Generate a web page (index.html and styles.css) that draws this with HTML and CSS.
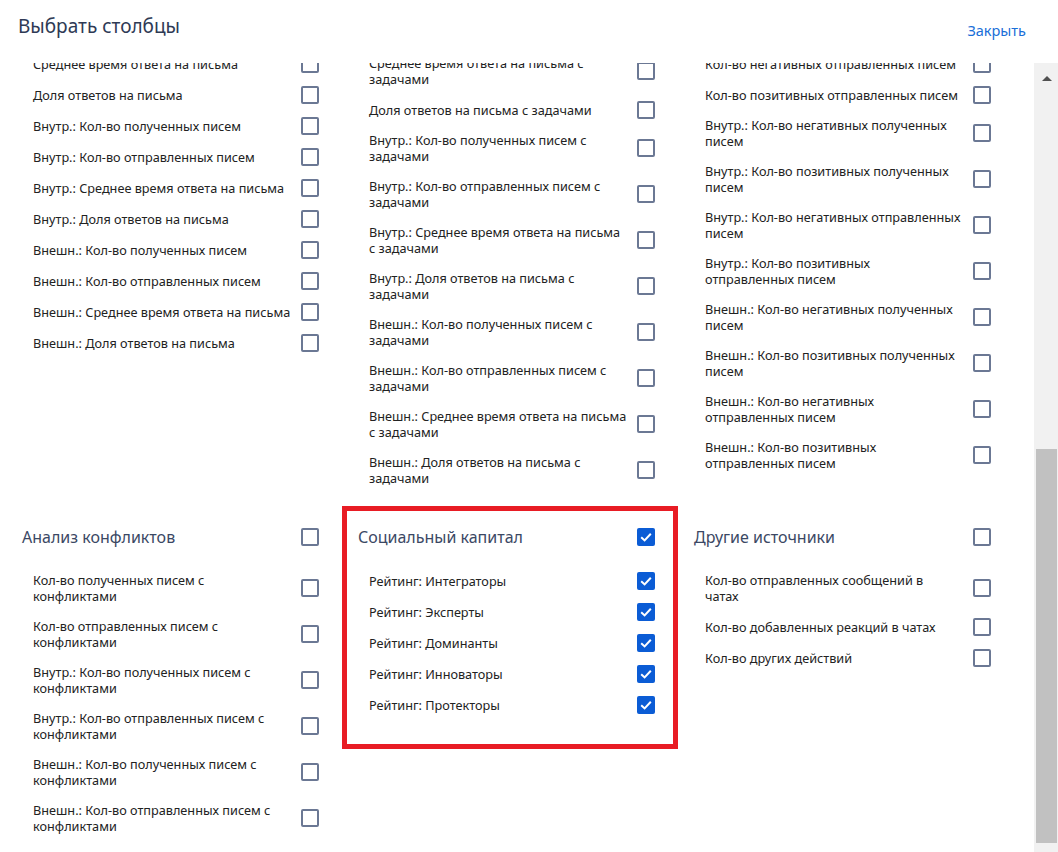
FILE: index.html
```html
<!DOCTYPE html>
<html lang="ru">
<head>
    <meta charset="UTF-8">
    <meta name="viewport" content="width=device-width, initial-scale=1.0">
    <title>Выбрать столбцы</title>
    <link rel="stylesheet" href="styles.css">
</head>
<body>
    <header class="dialog-header">
        <h1 class="dialog-title">Выбрать столбцы</h1>
        <a class="close-link" href="#">Закрыть</a>
    </header>

    <div class="dialog-body">
        <div class="columns-panel">
            <div class="groups">
                <!-- row 1: already scrolled, group headers are above the visible area -->
                <section class="group continued">
                    <div class="item"><span>Среднее время ответа на письма</span><span class="checkbox"></span></div>
                    <div class="item"><span>Доля ответов на письма</span><span class="checkbox"></span></div>
                    <div class="item"><span>Внутр.: Кол-во полученных писем</span><span class="checkbox"></span></div>
                    <div class="item"><span>Внутр.: Кол-во отправленных писем</span><span class="checkbox"></span></div>
                    <div class="item"><span>Внутр.: Среднее время ответа на письма</span><span class="checkbox"></span></div>
                    <div class="item"><span>Внутр.: Доля ответов на письма</span><span class="checkbox"></span></div>
                    <div class="item"><span>Внешн.: Кол-во полученных писем</span><span class="checkbox"></span></div>
                    <div class="item"><span>Внешн.: Кол-во отправленных писем</span><span class="checkbox"></span></div>
                    <div class="item"><span>Внешн.: Среднее время ответа на письма</span><span class="checkbox"></span></div>
                    <div class="item"><span>Внешн.: Доля ответов на письма</span><span class="checkbox"></span></div>
                </section>

                <section class="group continued">
                    <div class="item"><span>Среднее время ответа на письма с<br>задачами</span><span class="checkbox"></span></div>
                    <div class="item"><span>Доля ответов на письма с задачами</span><span class="checkbox"></span></div>
                    <div class="item"><span>Внутр.: Кол-во полученных писем с<br>задачами</span><span class="checkbox"></span></div>
                    <div class="item"><span>Внутр.: Кол-во отправленных писем с<br>задачами</span><span class="checkbox"></span></div>
                    <div class="item"><span>Внутр.: Среднее время ответа на письма<br>с задачами</span><span class="checkbox"></span></div>
                    <div class="item"><span>Внутр.: Доля ответов на письма с<br>задачами</span><span class="checkbox"></span></div>
                    <div class="item"><span>Внешн.: Кол-во полученных писем с<br>задачами</span><span class="checkbox"></span></div>
                    <div class="item"><span>Внешн.: Кол-во отправленных писем с<br>задачами</span><span class="checkbox"></span></div>
                    <div class="item"><span>Внешн.: Среднее время ответа на письма<br>с задачами</span><span class="checkbox"></span></div>
                    <div class="item"><span>Внешн.: Доля ответов на письма с<br>задачами</span><span class="checkbox"></span></div>
                </section>

                <section class="group continued">
                    <div class="item"><span>Кол-во негативных отправленных писем</span><span class="checkbox"></span></div>
                    <div class="item"><span>Кол-во позитивных отправленных писем</span><span class="checkbox"></span></div>
                    <div class="item"><span>Внутр.: Кол-во негативных полученных<br>писем</span><span class="checkbox"></span></div>
                    <div class="item"><span>Внутр.: Кол-во позитивных полученных<br>писем</span><span class="checkbox"></span></div>
                    <div class="item"><span>Внутр.: Кол-во негативных отправленных<br>писем</span><span class="checkbox"></span></div>
                    <div class="item"><span>Внутр.: Кол-во позитивных<br>отправленных писем</span><span class="checkbox"></span></div>
                    <div class="item"><span>Внешн.: Кол-во негативных полученных<br>писем</span><span class="checkbox"></span></div>
                    <div class="item"><span>Внешн.: Кол-во позитивных полученных<br>писем</span><span class="checkbox"></span></div>
                    <div class="item"><span>Внешн.: Кол-во негативных<br>отправленных писем</span><span class="checkbox"></span></div>
                    <div class="item"><span>Внешн.: Кол-во позитивных<br>отправленных писем</span><span class="checkbox"></span></div>
                </section>

                <!-- row 2 -->
                <section class="group">
                    <div class="group-header"><span>Анализ конфликтов</span><span class="checkbox"></span></div>
                    <div class="item"><span>Кол-во полученных писем с<br>конфликтами</span><span class="checkbox"></span></div>
                    <div class="item"><span>Кол-во отправленных писем с<br>конфликтами</span><span class="checkbox"></span></div>
                    <div class="item"><span>Внутр.: Кол-во полученных писем с<br>конфликтами</span><span class="checkbox"></span></div>
                    <div class="item"><span>Внутр.: Кол-во отправленных писем с<br>конфликтами</span><span class="checkbox"></span></div>
                    <div class="item"><span>Внешн.: Кол-во полученных писем с<br>конфликтами</span><span class="checkbox"></span></div>
                    <div class="item"><span>Внешн.: Кол-во отправленных писем с<br>конфликтами</span><span class="checkbox"></span></div>
                </section>

                <section class="group highlighted">
                    <div class="group-header"><span>Социальный капитал</span><span class="checkbox checked"><svg viewBox="0 0 18 18"><polyline points="4.2,9.2 7.6,12.4 13.8,5.8"/></svg></span></div>
                    <div class="item"><span>Рейтинг: Интеграторы</span><span class="checkbox checked"><svg viewBox="0 0 18 18"><polyline points="4.2,9.2 7.6,12.4 13.8,5.8"/></svg></span></div>
                    <div class="item"><span>Рейтинг: Эксперты</span><span class="checkbox checked"><svg viewBox="0 0 18 18"><polyline points="4.2,9.2 7.6,12.4 13.8,5.8"/></svg></span></div>
                    <div class="item"><span>Рейтинг: Доминанты</span><span class="checkbox checked"><svg viewBox="0 0 18 18"><polyline points="4.2,9.2 7.6,12.4 13.8,5.8"/></svg></span></div>
                    <div class="item"><span>Рейтинг: Инноваторы</span><span class="checkbox checked"><svg viewBox="0 0 18 18"><polyline points="4.2,9.2 7.6,12.4 13.8,5.8"/></svg></span></div>
                    <div class="item"><span>Рейтинг: Протекторы</span><span class="checkbox checked"><svg viewBox="0 0 18 18"><polyline points="4.2,9.2 7.6,12.4 13.8,5.8"/></svg></span></div>
                </section>

                <section class="group">
                    <div class="group-header"><span>Другие источники</span><span class="checkbox"></span></div>
                    <div class="item"><span>Кол-во отправленных сообщений в<br>чатах</span><span class="checkbox"></span></div>
                    <div class="item"><span>Кол-во добавленных реакций в чатах</span><span class="checkbox"></span></div>
                    <div class="item"><span>Кол-во других действий</span><span class="checkbox"></span></div>
                </section>
            </div>
        </div>

        <div class="scrollbar">
            <div class="scroll-arrow"></div>
            <div class="scroll-thumb"></div>
        </div>
    </div>
</body>
</html>
```

FILE: styles.css
```css
body {
    font-family: "Noto Sans", "Open Sans", sans-serif;
    margin: 0;
    padding: 0;
    background-color: #ffffff;
    color: #222222;
    height: 852px;
    overflow: hidden;
    display: flex;
    flex-direction: column;
}
.dialog-header {
    height: 63px;
    flex-shrink: 0;
    display: flex;
    justify-content: space-between;
    align-items: flex-start;
    padding: 12px 32px 0 18px;
    box-sizing: border-box;
}
.dialog-title {
    margin: 0;
    font-size: 19px;
    font-weight: 400;
    line-height: 28px;
    color: #2e3a55;
}
.close-link {
    margin-top: 7px;
    font-size: 14.5px;
    line-height: 22px;
    color: #1a6fd8;
    text-decoration: none;
}
.dialog-body {
    flex: 1;
    display: flex;
    min-height: 0;
}
.columns-panel {
    flex: 1;
    overflow: hidden;
    padding-left: 6px;
}
.groups {
    display: grid;
    grid-template-columns: repeat(3, 336px);
    align-items: start;
    margin-top: -15px;
}
.group {
    padding: 12px 0;
    position: relative;
}
.group.continued {
    padding-top: 0;
}
.group.highlighted::after {
    content: "";
    position: absolute;
    top: 1px;
    left: 0;
    right: 0;
    bottom: -17px;
    border: 5px solid #e81c24;
}
.group-header {
    height: 40px;
    margin-bottom: 8px;
    display: flex;
    justify-content: space-between;
    align-items: center;
    padding: 0 23px 0 16px;
    font-size: 16px;
    color: #3b4864;
}
.item {
    display: grid;
    grid-template-columns: 1fr 18px;
    column-gap: 10px;
    align-items: center;
    padding: 7px 23px 7px 27px;
    font-size: 12.7px;
    line-height: 16px;
    color: #222222;
    white-space: nowrap;
}
.checkbox {
    width: 18px;
    height: 18px;
    margin: -0.5px 0;
    box-sizing: border-box;
    border: 2px solid #6b7894;
    border-radius: 2px;
    background: #ffffff;
    display: block;
}
.group-header .checkbox {
    margin: 0;
}
.checkbox.checked {
    border: none;
    background: #0b5cd5;
}
.checkbox svg {
    display: block;
    width: 18px;
    height: 18px;
    fill: none;
    stroke: #ffffff;
    stroke-width: 2;
}
.scrollbar {
    width: 24px;
    flex-shrink: 0;
    background: #f1f1f1;
    display: flex;
    flex-direction: column;
    align-items: flex-end;
    padding-right: 1px;
    box-sizing: border-box;
}
.scroll-arrow {
    width: 0;
    height: 0;
    margin: 13px 5px 0 0;
    border-left: 5.5px solid transparent;
    border-right: 5.5px solid transparent;
    border-bottom: 5px solid #505050;
}
.scroll-thumb {
    width: 21px;
    height: 394px;
    margin-top: auto;
    margin-bottom: 9px;
    background: #c1c1c1;
}
```
